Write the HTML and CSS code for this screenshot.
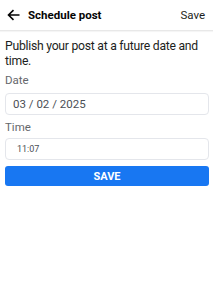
FILE: index.html
```html
<!DOCTYPE html>
<html>
<head>
<meta charset="utf-8">
<link rel="stylesheet" href="styles.css">
</head>
<body>
<div class="header">
  <svg class="back" width="13" height="12" viewBox="0 0 13 12"><path d="M12.5 6H1.8M6.5 1.2L1.5 6l5 4.8" fill="none" stroke="#050505" stroke-width="1.6"/></svg>
  <span class="title">Schedule post</span>
  <span class="save-link">Save</span>
</div>
<div class="content">
  <p class="desc">Publish your post at a future date and time.</p>
  <div class="label">Date</div>
  <div class="field date">03 / 02 / 2025</div>
  <div class="label label-time">Time</div>
  <div class="field time">11:07</div>
  <button class="btn">SAVE</button>
</div>
</body>
</html>
```
FILE: styles.css
```css
* { box-sizing: border-box; }
body { margin: 0; background: #fff; font-family: Roboto, "Liberation Sans", sans-serif; color: #1c1e21; }
.header { height: 31px; display: flex; align-items: center; padding: 0 8px 0 7px; border-bottom: 1px solid #e8e8e8; box-shadow: 0 1px 1px rgba(0,0,0,0.04); }
.back { margin-right: 8px; }
.title { font-weight: bold; font-size: 11.5px; flex: 1; color: #050505; }
.save-link { font-size: 11.5px; color: #1c1e21; }
.content { padding: 8px 4px 0 5px; }
.desc { margin: 0 0 4px; font-size: 12.2px; letter-spacing: -0.25px; line-height: 15px; color: #1c1e21; }
.label { font-size: 11.5px; color: #65676b; margin-top: 4px; line-height: 14px; }
.label-time { margin-top: 5px; }
.field { border: 1px solid #e4e6eb; border-radius: 4px; margin-top: 6px; height: 22px; display: flex; align-items: center; color: #4b4f56; }
.date { font-size: 11.5px; padding-left: 7px; }
.time { font-size: 9px; padding-left: 11px; margin-top: 4px; }
.btn { display: block; width: 100%; margin-top: 6px; height: 20px; border: 0; border-radius: 3px; background: #1877f2; color: #fff; font-family: Roboto, "Liberation Sans", sans-serif; font-weight: bold; font-size: 11px; padding: 0; }
```
